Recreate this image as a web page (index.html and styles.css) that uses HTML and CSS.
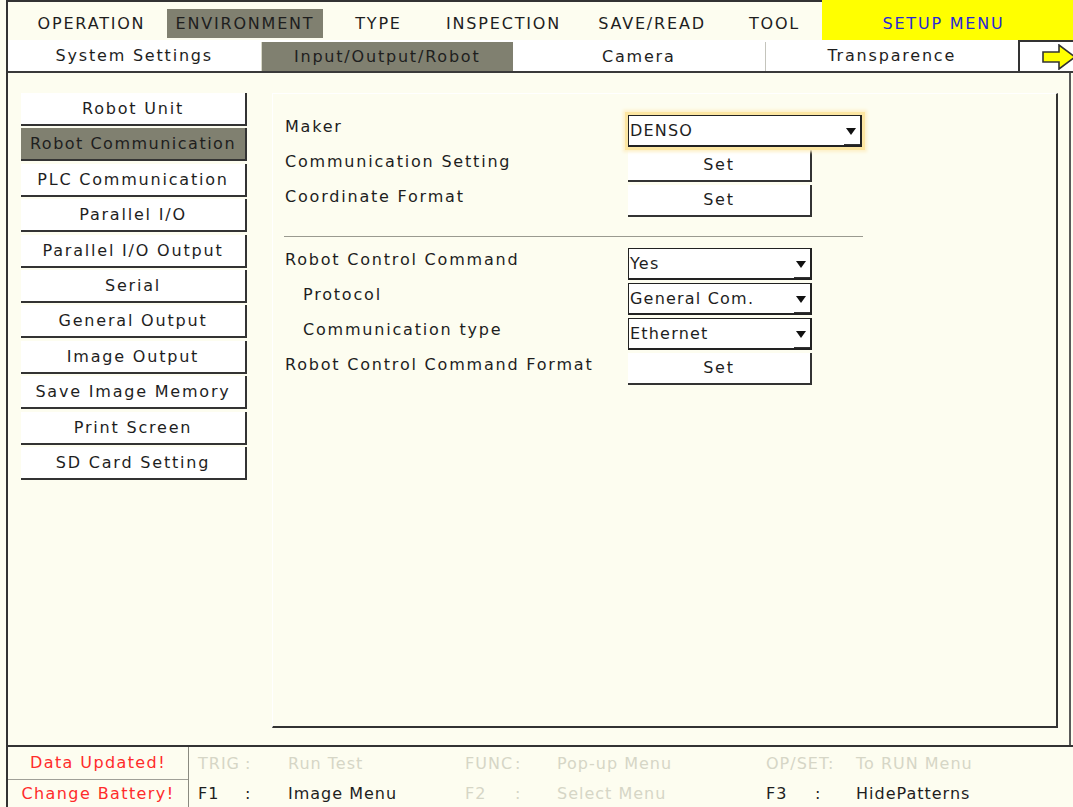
FILE: index.html
```html
<!DOCTYPE html>
<html lang="en">
<head>
<meta charset="utf-8">
<title>Setup Menu - Input/Output/Robot</title>
<link rel="stylesheet" href="styles.css">
</head>
<body>
<div class="screen">
  <header class="menubar">
    <div class="menu-item m-op"><span>OPERATION</span></div>
    <div class="menu-item m-env active"><span>ENVIRONMENT</span></div>
    <div class="menu-item m-type"><span>TYPE</span></div>
    <div class="menu-item m-insp"><span>INSPECTION</span></div>
    <div class="menu-item m-save"><span>SAVE/READ</span></div>
    <div class="menu-item m-tool"><span>TOOL</span></div>
    <div class="menu-setup">SETUP MENU</div>
  </header>

  <nav class="tabs">
    <div class="tab">System Settings</div>
    <div class="tab active">Input/Output/Robot</div>
    <div class="tab split">Camera</div>
    <div class="tab">Transparence</div>
    <div class="tab-next">
      <svg width="34" height="26" viewBox="0 0 34 26"><polygon points="1,8 17,8 17,1 33,13 17,25 17,18 1,18" fill="#ffff00" stroke="#333" stroke-width="1.6" stroke-linejoin="miter"/></svg>
    </div>
  </nav>

  <main class="main">
    <ul class="side">
      <li class="side-btn">Robot Unit</li>
      <li class="side-btn selected">Robot Communication</li>
      <li class="side-btn">PLC Communication</li>
      <li class="side-btn">Parallel I/O</li>
      <li class="side-btn">Parallel I/O Output</li>
      <li class="side-btn">Serial</li>
      <li class="side-btn">General Output</li>
      <li class="side-btn">Image Output</li>
      <li class="side-btn">Save Image Memory</li>
      <li class="side-btn">Print Screen</li>
      <li class="side-btn">SD Card Setting</li>
    </ul>

    <section class="panel">
      <div class="row">
        <div class="label">Maker</div>
        <div class="select wide focus">DENSO</div>
      </div>
      <div class="row">
        <div class="label">Communication Setting</div>
        <div class="btn">Set</div>
      </div>
      <div class="row">
        <div class="label">Coordinate Format</div>
        <div class="btn">Set</div>
      </div>

      <div class="divider"></div>

      <div class="row">
        <div class="label">Robot Control Command</div>
        <div class="select">Yes</div>
      </div>
      <div class="row indent">
        <div class="label">Protocol</div>
        <div class="select">General Com.</div>
      </div>
      <div class="row indent">
        <div class="label">Communication type</div>
        <div class="select">Ethernet</div>
      </div>
      <div class="row">
        <div class="label">Robot Control Command Format</div>
        <div class="btn">Set</div>
      </div>
    </section>
  </main>

  <footer class="footer">
    <div class="status">
      <div class="status-line">Data Updated!</div>
      <div class="status-line">Change Battery!</div>
    </div>
    <div class="fkeys">
      <span class="dim">TRIG</span><span class="dim">:</span><span class="dim">Run Test</span>
      <span class="dim">FUNC</span><span class="dim">:</span><span class="dim">Pop-up Menu</span>
      <span class="dim span2">OP/SET:</span><span class="dim">To RUN Menu</span>

      <span>F1</span><span>:</span><span>Image Menu</span>
      <span class="dim">F2</span><span class="dim">:</span><span class="dim">Select Menu</span>
      <span>F3</span><span>:</span><span>HidePatterns</span>
    </div>
  </footer>
</div>
</body>
</html>
```

FILE: styles.css
```css
* {
  box-sizing: border-box;
  margin: 0;
  padding: 0;
}

html,
body {
  width: 1073px;
  height: 807px;
  overflow: hidden;
}

body {
  background: #fdfdf0;
  font-family: "DejaVu Sans", sans-serif;
  font-size: 16px;
  letter-spacing: 1.8px;
  color: #1e1e1e;
}

.screen {
  height: 807px;
  margin-left: 6px;
  border-left: 2px solid #333;
  display: flex;
  flex-direction: column;
}

/* ---- top menu bar ---- */
.menubar {
  flex: none;
  height: 40px;
  display: flex;
}

.menu-item {
  border-top: 2px solid #333;
  padding-top: 7px;
  display: flex;
  justify-content: center;
}

.menu-item span {
  display: block;
  height: 29px;
  line-height: 29px;
  white-space: nowrap;
}

.m-op { width: 155px; padding-left: 12px; }
.m-env { width: 164px; padding-left: 4px; padding-right: 4px; }
.m-type { width: 103px; }
.m-insp { width: 147px; }
.m-save { width: 150px; }
.m-tool { width: 95px; }

.menu-item.active span {
  width: 100%;
  text-align: center;
  background: #808070;
}

.menu-setup {
  flex: 1;
  background: #ffff00;
  color: #2828d8;
  text-align: center;
  padding-top: 9px;
  line-height: 29px;
  padding-right: 8px;
}

/* ---- sub tabs ---- */
.tabs {
  flex: none;
  height: 33px;
  display: flex;
  background: #fff;
  border-bottom: 2px solid #3a3a3a;
}

.tab {
  width: 252.5px;
  text-align: center;
  line-height: 31px;
  white-space: nowrap;
}

.tab.active {
  margin-top: 2px;
  line-height: 29px;
  background: #808070;
  border-left: 1px solid #d8d8c8;
}

.tab.split {
  border-right: 1px solid #c4c4bc;
  margin-top: 2px;
  line-height: 29px;
}

.tab-next {
  flex: 1;
  border-left: 2px solid #333;
  border-top: 2px solid #333;
  overflow: hidden;
  display: flex;
  align-items: center;
  padding-left: 22px;
}

.tab-next svg {
  flex: none;
  margin-top: 1px;
}

/* ---- main area ---- */
.main {
  flex: 1;
  display: flex;
  align-items: flex-start;
  padding: 20px 0 17px 13px;
  margin-right: 2px;
  border-right: 2px solid #5a5a5a;
}

.side {
  list-style: none;
  width: 226px;
  flex: none;
  display: flex;
  flex-direction: column;
  gap: 2.4px;
}

.side-btn {
  height: 33px;
  background: #fff;
  border-right: 2px solid #333;
  border-bottom: 2px solid #333;
  text-align: center;
  line-height: 31px;
  white-space: nowrap;
}

.side-btn.selected {
  background: #808070;
  letter-spacing: 1.5px;
}

.panel {
  margin-left: 25px;
  width: 786px;
  height: 635px;
  border-left: 1px solid #fff;
  border-top: 1px solid #fff;
  border-right: 2px solid #333;
  border-bottom: 2px solid #333;
  padding: 19px 0 0 12px;
}

.row {
  height: 35px;
  display: flex;
}

.label {
  width: 343px;
  flex: none;
  padding-top: 4px;
  line-height: 20px;
  white-space: nowrap;
}

.indent .label {
  padding-left: 18px;
}

.select {
  position: relative;
  width: 184px;
  height: 32px;
  margin-top: 2px;
  background: #fff;
  border: 1px solid #222;
  border-right-width: 2px;
  border-bottom-width: 2px;
  padding-left: 1px;
  line-height: 29px;
  letter-spacing: 1.2px;
  white-space: nowrap;
}

.select.wide {
  width: 234px;
}

.select.focus {
  box-shadow: 0 0 0 3px #fce6a2, 0 0 3px 5px #fdf0c8;
}

/* drop-down arrow and its small button edge */
.select::after {
  content: "";
  position: absolute;
  right: 4px;
  top: 12px;
  border-left: 5px solid transparent;
  border-right: 5px solid transparent;
  border-top: 7px solid #111;
}

.select::before {
  content: "";
  position: absolute;
  right: 0;
  bottom: 0;
  width: 16px;
  height: 1px;
  background: #333;
}

.btn {
  width: 184px;
  height: 32px;
  margin-top: 2px;
  background: #fff;
  border-right: 2px solid #333;
  border-bottom: 2px solid #333;
  text-align: center;
  line-height: 30px;
}

.divider {
  width: 579px;
  height: 1px;
  margin: 18px 0 9px -1px;
  background: #9a9a90;
}

/* ---- footer ---- */
.footer {
  flex: none;
  height: 62px;
  border-top: 2px solid #333;
  display: flex;
}

.status {
  width: 181px;
  flex: none;
  border-right: 1px solid #8a8a80;
  display: flex;
  flex-direction: column;
  color: #ff2b2b;
  text-align: center;
  letter-spacing: 1.4px;
}

.status-line {
  height: 33px;
  line-height: 31px;
  border-bottom: 1px solid #a0a098;
}

.status-line + .status-line {
  height: 27px;
  border-bottom: none;
  line-height: 27px;
}

.fkeys {
  flex: 1;
  display: grid;
  grid-template-columns: 47px 43px 177px 50px 42px 209px 49px 41px 1fr;
  grid-template-rows: 33px 27px;
  padding-left: 9px;
  align-items: center;
  white-space: nowrap;
  letter-spacing: 1px;
}

.fkeys .span2 {
  grid-column: span 2;
}

.dim {
  color: #d6d6c6;
}
```
